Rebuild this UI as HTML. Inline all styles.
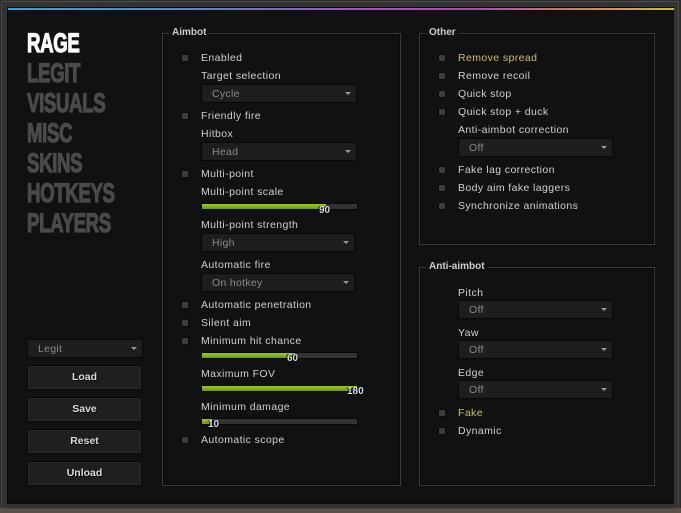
<!DOCTYPE html>
<html><head><meta charset="utf-8"><style>
*{margin:0;padding:0;box-sizing:border-box}
body{width:681px;height:513px;background:#2e2e2e;position:relative;overflow:hidden;font-family:"Liberation Sans",sans-serif;}
#outer{position:absolute;left:1px;top:1px;width:678px;height:508px;background:#333;border:1px solid #4a4a4a}
#photo{position:absolute;left:0;top:508px;width:681px;height:5px;background:#5a5048}
#main{position:absolute;left:7px;top:7px;width:667px;height:497px;background:#111;border:1px solid #0a0a0a}
#grad{position:absolute;left:8px;top:8px;width:666px;height:2px;background:linear-gradient(90deg,#2aa8d8,#7a6ad0 40%,#c040b0 70%,#c8c020)}
.nav{position:absolute;left:27px;font-weight:bold;font-size:27px;line-height:27px;color:#4a4a4a;transform:scaleX(0.69);transform-origin:left;-webkit-text-stroke:1.2px #4a4a4a;letter-spacing:-0.5px}
.nav.w{color:#fff;-webkit-text-stroke:1.2px #fff}
.grp{position:absolute;border:1px solid #3a3a3a;box-shadow:inset 0 0 0 1px #0a0a0a}
.gt{position:absolute;top:-7px;left:6px;background:#111;padding:0 3px;font-size:10px;font-weight:bold;color:#ccc}
.cb{position:absolute;width:8px;height:8px;background:#3c3c3c;border:1px solid #0a0a0a}
.l{position:absolute;font-size:10.5px;color:#d0d0d0;white-space:nowrap;letter-spacing:.4px}
.y{color:#c8c060}
.dd{position:absolute;height:19px;background:#1e1e1e;border:1px solid #080808;font-size:10.5px;color:#8a8a8a;padding:3px 0 0 10px;letter-spacing:.3px}
.dd:after{content:"";position:absolute;right:5px;top:7px;border-left:3px solid transparent;border-right:3px solid transparent;border-top:3px solid #999}
.sl{position:absolute;height:7px;background:#333;border:1px solid #080808}
.sl i{position:absolute;left:0;top:0;height:5px;background:linear-gradient(#9cc82a,#6e9a10)}
.sv{position:absolute;font-size:10px;font-weight:bold;color:#ddd;text-shadow:1px 1px 0 #000,-1px 0 0 #000}
.btn{position:absolute;left:27px;width:115px;height:25px;background:#1f1f1f;border:1px solid #080808;box-shadow:inset 0 0 0 1px #2a2a2a;font-size:10.5px;font-weight:bold;color:#ddd;text-align:center;line-height:23px;text-shadow:1px 1px 0 #000}
</style></head><body>
<div id="photo"></div>
<div id="outer"></div>
<div id="main"></div>
<div id="grad"></div>

<div class="nav w" style="top:30px">RAGE</div>
<div class="nav" style="top:60px">LEGIT</div>
<div class="nav" style="top:90px">VISUALS</div>
<div class="nav" style="top:120px">MISC</div>
<div class="nav" style="top:150px">SKINS</div>
<div class="nav" style="top:180px">HOTKEYS</div>
<div class="nav" style="top:210px">PLAYERS</div>

<div class="dd" style="left:27px;top:339px;width:116px">Legit</div>
<div class="btn" style="top:365px">Load</div>
<div class="btn" style="top:397px">Save</div>
<div class="btn" style="top:429px">Reset</div>
<div class="btn" style="top:461px">Unload</div>

<div class="grp" style="left:162px;top:33px;width:239px;height:453px"><div class="gt">Aimbot</div></div>
<div class="grp" style="left:419px;top:33px;width:236px;height:212px"><div class="gt">Other</div></div>
<div class="grp" style="left:419px;top:267px;width:236px;height:219px"><div class="gt">Anti-aimbot</div></div>

<div class="cb" style="left:181px;top:54px"></div><div class="l" style="left:201px;top:52px">Enabled</div>
<div class="l" style="left:201px;top:70px">Target selection</div>
<div class="dd" style="left:201px;top:84px;width:156px">Cycle</div>
<div class="cb" style="left:181px;top:112px"></div><div class="l" style="left:201px;top:110px">Friendly fire</div>
<div class="l" style="left:201px;top:128px">Hitbox</div>
<div class="dd" style="left:201px;top:142px;width:156px">Head</div>
<div class="cb" style="left:181px;top:170px"></div><div class="l" style="left:201px;top:168px">Multi-point</div>
<div class="l" style="left:201px;top:186px">Multi-point scale</div>
<div class="sl" style="left:201px;top:203px;width:157px"><i style="width:124px"></i></div><div class="sv" style="left:319px;top:205px">90</div>
<div class="l" style="left:201px;top:219px">Multi-point strength</div>
<div class="dd" style="left:201px;top:233px;width:154px">High</div>
<div class="l" style="left:201px;top:259px">Automatic fire</div>
<div class="dd" style="left:201px;top:273px;width:154px">On hotkey</div>
<div class="cb" style="left:181px;top:301px"></div><div class="l" style="left:201px;top:299px">Automatic penetration</div>
<div class="cb" style="left:181px;top:319px"></div><div class="l" style="left:201px;top:317px">Silent aim</div>
<div class="cb" style="left:181px;top:337px"></div><div class="l" style="left:201px;top:335px">Minimum hit chance</div>
<div class="sl" style="left:201px;top:352px;width:157px"><i style="width:93px"></i></div><div class="sv" style="left:287px;top:353px">60</div>
<div class="l" style="left:201px;top:368px">Maximum FOV</div>
<div class="sl" style="left:201px;top:385px;width:157px"><i style="width:155px"></i></div><div class="sv" style="left:347px;top:386px">180</div>
<div class="l" style="left:201px;top:401px">Minimum damage</div>
<div class="sl" style="left:201px;top:418px;width:157px"><i style="width:10px"></i></div><div class="sv" style="left:208px;top:419px">10</div>
<div class="cb" style="left:181px;top:436px"></div><div class="l" style="left:201px;top:434px">Automatic scope</div>

<div class="cb" style="left:438px;top:54px"></div><div class="l y" style="left:458px;top:52px">Remove spread</div>
<div class="cb" style="left:438px;top:72px"></div><div class="l" style="left:458px;top:70px">Remove recoil</div>
<div class="cb" style="left:438px;top:90px"></div><div class="l" style="left:458px;top:88px">Quick stop</div>
<div class="cb" style="left:438px;top:108px"></div><div class="l" style="left:458px;top:106px">Quick stop + duck</div>
<div class="l" style="left:458px;top:124px">Anti-aimbot correction</div>
<div class="dd" style="left:458px;top:138px;width:155px">Off</div>
<div class="cb" style="left:438px;top:166px"></div><div class="l" style="left:458px;top:164px">Fake lag correction</div>
<div class="cb" style="left:438px;top:184px"></div><div class="l" style="left:458px;top:182px">Body aim fake laggers</div>
<div class="cb" style="left:438px;top:202px"></div><div class="l" style="left:458px;top:200px">Synchronize animations</div>

<div class="l" style="left:458px;top:287px">Pitch</div>
<div class="dd" style="left:458px;top:300px;width:155px">Off</div>
<div class="l" style="left:458px;top:327px">Yaw</div>
<div class="dd" style="left:458px;top:340px;width:155px">Off</div>
<div class="l" style="left:458px;top:367px">Edge</div>
<div class="dd" style="left:458px;top:380px;width:155px">Off</div>
<div class="cb" style="left:438px;top:409px"></div><div class="l y" style="left:458px;top:407px">Fake</div>
<div class="cb" style="left:438px;top:427px"></div><div class="l" style="left:458px;top:425px">Dynamic</div>
</body></html>
